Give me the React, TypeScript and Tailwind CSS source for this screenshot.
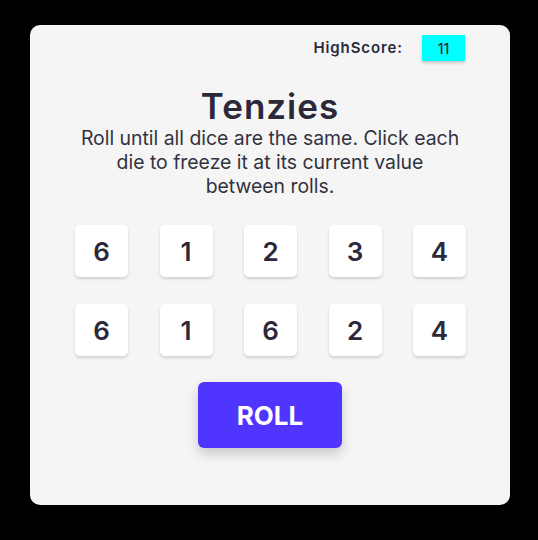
export default function App() {
  const dice = [6, 1, 2, 3, 4, 6, 1, 6, 2, 4];

  return (
    <div className="min-h-screen bg-black pt-[25px] pl-[30px] font-['Inter',sans-serif]">
      <main className="w-[480px] h-[480px] bg-[#f5f5f5] rounded-[10px] flex flex-col items-center">
        <div className="self-end mt-[10px] mr-[45px] flex items-center gap-[19px]">
          <span className="text-[15px] font-semibold tracking-[0.9px] text-[#2b283a]">HighScore:</span>
          <span className="w-[43px] h-[26px] bg-[#00ffff] flex items-center justify-center text-[14px] font-medium text-[#2b283a] shadow-[0_2px_3px_rgba(0,0,0,0.2)]">
            11
          </span>
        </div>
        <h1 className="mt-[25px] text-[35px] leading-[40px] font-semibold tracking-[1px] text-[#2b283a]">Tenzies</h1>
        <p className="w-[382px] text-center text-[19.4px] leading-[24px] text-[#32323f]">
          Roll until all dice are the same. Click each die to freeze it at its current value between rolls.
        </p>
        <div className="mt-[27px] ml-[1px] grid grid-cols-5 gap-x-[31.5px] gap-y-[27px]">
          {dice.map((d, i) => (
            <button
              key={i}
              className="w-[53px] h-[52px] bg-white rounded-[5px] shadow-[0_2px_3px_rgba(0,0,0,0.15)] flex items-center justify-center text-[26px] font-semibold text-[#2b283a]"
            >
              {d}
            </button>
          ))}
        </div>
        <button className="mt-[26px] w-[144px] h-[66px] bg-[#5035ff] rounded-[6px] text-white text-[26px] font-bold shadow-[0_6px_12px_rgba(0,0,0,0.18)]">
          ROLL
        </button>
      </main>
    </div>
  );
}
